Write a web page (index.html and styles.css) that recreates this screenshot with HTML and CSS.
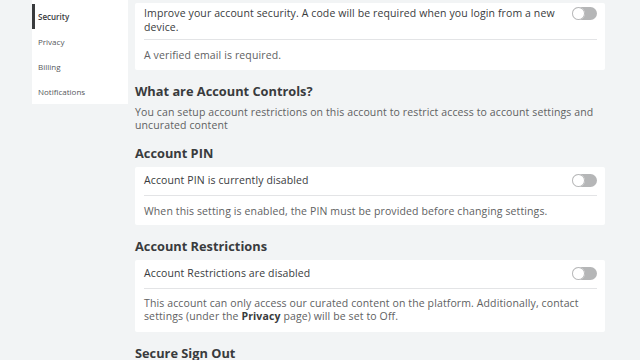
FILE: index.html
```html
<!DOCTYPE html>
<html>
<head>
<meta charset="utf-8">
<link rel="stylesheet" href="styles.css">
</head>
<body>
<div class="layout">
  <nav class="sidebar">
    <div class="nav-item active">Security</div>
    <div class="nav-item">Privacy</div>
    <div class="nav-item">Billing</div>
    <div class="nav-item">Notifications</div>
  </nav>
  <main class="main">
    <section class="card first">
      <div class="row">
        <div class="row-text two-line">Improve your account security. A code will be required when you login from a new device.</div>
        <span class="toggle"></span>
      </div>
      <div class="note">A verified email is required.</div>
    </section>

    <h2 class="heading">What are Account Controls?</h2>
    <p class="desc">You can setup account restrictions on this account to restrict access to account settings and uncurated content</p>

    <h2 class="heading">Account PIN</h2>
    <section class="card">
      <div class="row">
        <div class="row-text">Account PIN is currently disabled</div>
        <span class="toggle"></span>
      </div>
      <div class="note">When this setting is enabled, the PIN must be provided before changing settings.</div>
    </section>

    <h2 class="heading">Account Restrictions</h2>
    <section class="card">
      <div class="row">
        <div class="row-text">Account Restrictions are disabled</div>
        <span class="toggle"></span>
      </div>
      <div class="note multi">This account can only access our curated content on the platform. Additionally, contact settings (under the <b>Privacy</b> page) will be set to Off.</div>
    </section>

    <h2 class="heading">Secure Sign Out</h2>
  </main>
</div>
</body>
</html>
```

FILE: styles.css
```css
* { box-sizing: border-box; }
html, body { margin: 0; padding: 0; }
body {
  background: #f2f4f5;
  font-family: "Open Sans", "Liberation Sans", sans-serif;
  color: #393b3d;
  width: 640px;
  height: 360px;
  overflow: hidden;
}
.layout {
  display: flex;
  align-items: flex-start;
  padding-left: 32px;
  gap: 7px;
}
.sidebar {
  width: 96px;
  background: #ffffff;
  padding-top: 4px;
  display: flex;
  flex-direction: column;
}
.nav-item {
  height: 25px;
  display: flex;
  align-items: center;
  padding-left: 6px;
  font-size: 8px;
  color: #55585b;
}
.nav-item.active {
  color: #393b3d;
  font-weight: 600;
  box-shadow: inset 3px 0 0 #393b3d;
}
.main {
  width: 470px;
  display: flex;
  flex-direction: column;
}
.card {
  background: #ffffff;
  border-radius: 2px;
  padding: 0 8px 0 9px;
}
.card.first { margin-top: 3px; }
.row {
  display: flex;
  align-items: flex-start;
  justify-content: space-between;
  padding: 6px 0 8px;
  border-bottom: 1px solid #e3e4e6;
  font-size: 10.5px;
  line-height: 14px;
  letter-spacing: 0.12px;
}
.row-text { color: #393b3d; }
.row-text.two-line { width: 420px; }
.card.first .row { padding-top: 3px; padding-bottom: 5px; }
.toggle {
  position: relative;
  flex: none;
  width: 25px;
  height: 13px;
  border-radius: 7px;
  background: #b5b6b7;
  margin-top: 0.5px;
}
.toggle::after {
  content: "";
  position: absolute;
  left: 0;
  top: 0;
  width: 13px;
  height: 13px;
  border-radius: 50%;
  background: #ffffff;
  box-shadow: 0 0 0 1px #b5b6b7 inset;
}
.note {
  font-size: 10.5px;
  line-height: 14px;
  letter-spacing: 0.12px;
  color: #606162;
  padding: 8px 0 7px;
}
.card.first .note { padding: 8px 0 8px; }
.note.multi {
  line-height: 13px;
  padding: 8px 0 9px;
}
.note b { font-weight: 700; color: #393b3d; }
.heading {
  margin: 12px 0 0;
  font-size: 12.8px;
  line-height: 18px;
  font-weight: 700;
  color: #393b3d;
}
.heading + .card { margin-top: 5px; }
.desc {
  margin: 6px 0 0;
  font-size: 10.5px;
  line-height: 13px;
  letter-spacing: 0.12px;
  color: #606162;
}
```
